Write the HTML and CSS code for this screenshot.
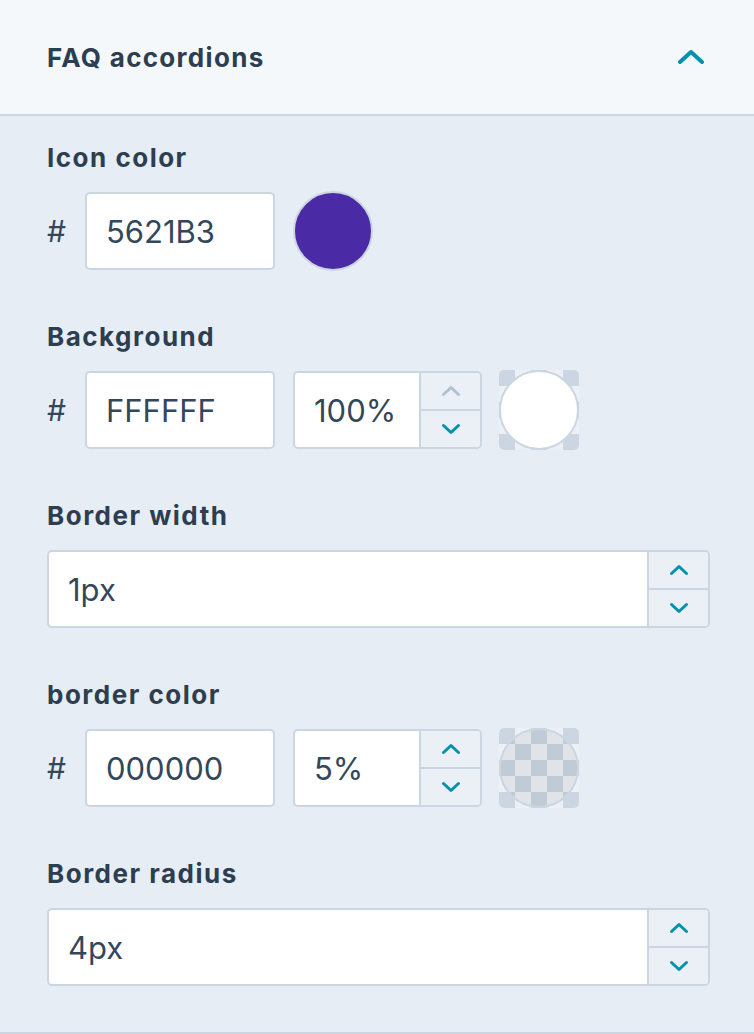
FILE: index.html
```html
<!DOCTYPE html>
<html lang="en">
<head>
    <meta charset="UTF-8">
    <title>FAQ accordions</title>
    <link rel="stylesheet" href="styles.css">
</head>
<body>

<div class="panel">
    <div class="panel-header">
        <h2>FAQ accordions</h2>
        <svg class="toggle" width="26" height="14" viewBox="0 0 26 14"><path d="M2 12 L13 2 L24 12" fill="none" stroke="#0091ae" stroke-width="4" stroke-linecap="round" stroke-linejoin="round"/></svg>
    </div>

    <div class="panel-body">
        <div class="field">
            <label>Icon color</label>
            <div class="color-row">
                <span class="hash">#</span>
                <input class="hex" type="text" value="5621B3">
                <span class="swatch plain"><span class="dot" style="background:#4b2aa5"></span></span>
            </div>
        </div>

        <div class="field">
            <label>Background</label>
            <div class="color-row">
                <span class="hash">#</span>
                <input class="hex" type="text" value="FFFFFF">
                <div class="number small">
                    <input type="text" value="100%">
                    <div class="spin">
                        <button class="off"><svg width="20" height="12" viewBox="0 0 20 12"><path d="M2.5 9.5 L10 2.5 L17.5 9.5"/></svg></button>
                        <button><svg width="20" height="12" viewBox="0 0 20 12"><path d="M2.5 2.5 L10 9.5 L17.5 2.5"/></svg></button>
                    </div>
                </div>
                <span class="swatch checker"><span class="dot" style="background:#ffffff"></span></span>
            </div>
        </div>

        <div class="field">
            <label>Border width</label>
            <div class="number">
                <input type="text" value="1px">
                <div class="spin">
                    <button><svg width="20" height="12" viewBox="0 0 20 12"><path d="M2.5 9.5 L10 2.5 L17.5 9.5"/></svg></button>
                    <button><svg width="20" height="12" viewBox="0 0 20 12"><path d="M2.5 2.5 L10 9.5 L17.5 2.5"/></svg></button>
                </div>
            </div>
        </div>

        <div class="field">
            <label>border color</label>
            <div class="color-row">
                <span class="hash">#</span>
                <input class="hex" type="text" value="000000">
                <div class="number small">
                    <input type="text" value="5%">
                    <div class="spin">
                        <button><svg width="20" height="12" viewBox="0 0 20 12"><path d="M2.5 9.5 L10 2.5 L17.5 9.5"/></svg></button>
                        <button><svg width="20" height="12" viewBox="0 0 20 12"><path d="M2.5 2.5 L10 9.5 L17.5 2.5"/></svg></button>
                    </div>
                </div>
                <span class="swatch checker"><span class="dot" style="background:rgba(0,0,0,0.05)"></span></span>
            </div>
        </div>

        <div class="field">
            <label>Border radius</label>
            <div class="number">
                <input type="text" value="4px">
                <div class="spin">
                    <button><svg width="20" height="12" viewBox="0 0 20 12"><path d="M2.5 9.5 L10 2.5 L17.5 9.5"/></svg></button>
                    <button><svg width="20" height="12" viewBox="0 0 20 12"><path d="M2.5 2.5 L10 9.5 L17.5 2.5"/></svg></button>
                </div>
            </div>
        </div>
    </div>
</div>

</body>
</html>
```

FILE: styles.css
```css
body {
    margin: 0;
    font-family: Inter, Lato, sans-serif;
    color: #33475b;
    background-color: #e6edf5;
}
.panel {
    height: 1034px;
    box-sizing: border-box;
    border-bottom: 2px solid #cbd6e2;
}
.panel-header {
    height: 114px;
    background-color: #f5f8fa;
    border-bottom: 2px solid #cbd6e2;
    display: flex;
    align-items: center;
    justify-content: space-between;
    padding: 0 50px 0 47px;
}
.panel-header h2 {
    margin: 0;
    font-size: 26px;
    font-weight: 700;
    letter-spacing: 1.3px;
    color: #2d3e50;
}
.toggle {
    display: block;
    margin-top: -1px;
}
.panel-body {
    padding: 26px 44px 0 47px;
}
.field {
    margin-bottom: 51px;
}
.field label {
    display: block;
    font-size: 26px;
    font-weight: 700;
    letter-spacing: 1.5px;
    line-height: 32px;
    margin-bottom: 18px;
    color: #2d3e50;
}
.color-row {
    display: flex;
    align-items: center;
    height: 78px;
}
.hash {
    width: 38px;
    font-size: 30px;
}
input {
    font-family: inherit;
    font-size: 31px;
    color: #33475b;
    border: none;
    outline: none;
    background: transparent;
    padding: 0 0 0 19px;
    box-sizing: border-box;
}
.hex {
    width: 190px;
    height: 78px;
    background: #ffffff;
    border: 2px solid #cbd6e2;
    border-radius: 5px;
}
.number {
    display: flex;
    height: 78px;
    background: #ffffff;
    border: 2px solid #cbd6e2;
    border-radius: 5px;
    box-sizing: border-box;
    overflow: hidden;
}
.number input {
    flex: 1;
    min-width: 0;
    height: 100%;
}
.number.small {
    width: 189px;
    margin-left: 18px;
}
.spin {
    width: 59px;
    border-left: 2px solid #cbd6e2;
    background-color: #eaf0f6;
    display: flex;
    flex-direction: column;
}
.spin button {
    flex: 1;
    border: none;
    background: transparent;
    padding: 0;
    display: flex;
    align-items: center;
    justify-content: center;
}
.spin button + button {
    border-top: 2px solid #cbd6e2;
}
.spin svg path {
    fill: none;
    stroke: #0091ae;
    stroke-width: 3;
    stroke-linecap: round;
    stroke-linejoin: round;
}
.spin button.off svg path {
    stroke: #b0c1d4;
}
.swatch {
    width: 80px;
    height: 80px;
    margin-left: 17px;
    border-radius: 5px;
    position: relative;
    display: block;
    flex-shrink: 0;
}
.swatch.plain {
    margin-left: 18px;
}
.checker {
    background: repeating-conic-gradient(#edf1f5 0 25%, #cbd6e2 0 50%) 0 0 / 32px 32px;
}
.dot {
    position: absolute;
    left: 0;
    top: 0;
    width: 80px;
    height: 80px;
    box-sizing: border-box;
    border-radius: 50%;
    border: 2px solid #cbd6e2;
}
```
